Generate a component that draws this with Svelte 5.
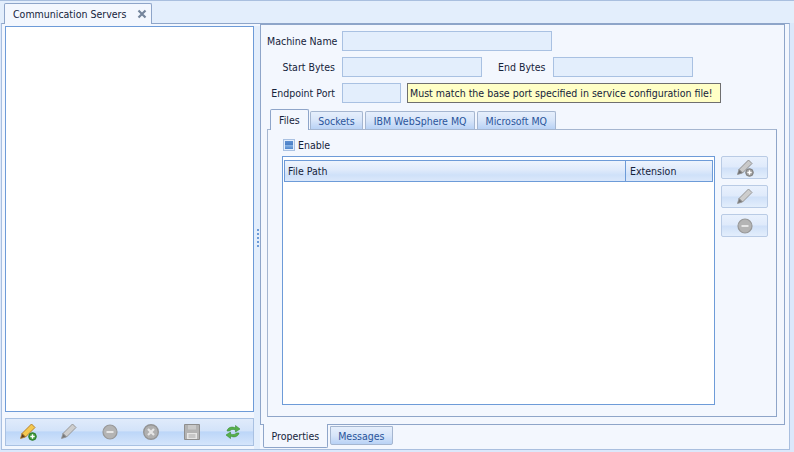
<script>
  const toolbar = ["add", "edit", "minus", "cross", "save", "refresh"];
  const sideButtons = ["addGrey", "edit", "minus"];
  const innerTabs = ["Sockets", "IBM WebSphere MQ", "Microsoft MQ"];
</script>

{#snippet pencil(body, edge, tip)}
  <path d="M12.500 1l3.500 3.500L6.500 14 3 10.500z" fill={body} stroke={edge} stroke-width="1" />
  <path d="M3 10.500L6.500 14l-5 1.500z" fill={tip} stroke={edge} stroke-width=".8" />
{/snippet}

{#snippet icon(name)}
  <svg class="icon" width="18" height="18" viewBox="0 0 18 18" aria-hidden="true">
    {#if name === "add"}
      {@render pencil("#f4c84e", "#b8812a", "#5a3a1e")}
      <circle cx="13.500" cy="13.500" r="3.800" fill="#3f9a3a" stroke="#2c7a2a" />
      <path d="M13.500 11.300v4.400M11.300 13.500h4.400" stroke="#fff" stroke-width="1.400" />
    {:else if name === "addGrey"}
      {@render pencil("#c9c9c9", "#8f8f8f", "#6f6f6f")}
      <circle cx="13.500" cy="13.500" r="3.800" fill="#9a9a9a" stroke="#7f7f7f" />
      <path d="M13.500 11.300v4.400M11.300 13.500h4.400" stroke="#fff" stroke-width="1.400" />
    {:else if name === "edit"}
      {@render pencil("#cdcdcd", "#979797", "#777")}
    {:else if name === "minus"}
      <circle cx="9" cy="9" r="7" fill="#b4b4b4" stroke="#989898" stroke-width="1.200" />
      <path d="M5.500 9h7" stroke="#e6e6e6" stroke-width="2" />
    {:else if name === "cross"}
      <circle cx="9" cy="9" r="7.300" fill="#b0b0b0" stroke="#949494" stroke-width="1.400" />
      <path d="M6 6l6 6M12 6l-6 6" stroke="#e6e6e6" stroke-width="2.200" />
    {:else if name === "save"}
      <path d="M1.500 1.500h15v15h-15z" fill="#b3b3b3" stroke="#8e8e8e" />
      <path d="M5 2h8v4.500H5z" fill="#c9c9c9" />
      <path d="M4 10h10v6H4z" fill="#e6e6e6" />
      <path d="M5.500 12h7M5.500 14h7" stroke="#a8a8a8" />
    {:else if name === "refresh"}
      <path d="M3 8c.6-3.500 5-5 8.500-3V2.500L16 6l-4.500 3V7c-2.500-1.200-5-.5-5.800 1z" fill="#56b04a" stroke="#3b8b35" stroke-width=".6" />
      <path d="M15 10c-.6 3.500-5 5-8.500 3v2.500L2 12l4.500-3v2c2.500 1.200 5 .5 5.800-1z" fill="#56b04a" stroke="#3b8b35" stroke-width=".6" />
    {/if}
  </svg>
{/snippet}

<div class="window">
  <div class="doc-tabs">
    <div class="doc-tab">
      <span>Communication Servers</span>
      <svg width="10" height="10" viewBox="0 0 10 10" aria-hidden="true">
        <path d="M1.500 1.500l7 7M8.500 1.500l-7 7" stroke="#75859c" stroke-width="2.200" />
      </svg>
    </div>
  </div>

  <div class="doc-body">
    <div class="left">
      <div class="list"></div>
      <div class="toolbar">
        {#each toolbar as name}
          <span class="tool">{@render icon(name)}</span>
        {/each}
      </div>
    </div>

    <div class="splitter">
      {#each [0, 1, 2, 3, 4] as dot}
        <i></i>
      {/each}
    </div>

    <div class="right">
      <div class="props">
        <div class="row">
          <label class="name" for="machine">Machine Name</label>
          <input id="machine" class="w210" />
        </div>
        <div class="row">
          <label class="name" for="start">Start Bytes</label>
          <input id="start" class="w140" />
          <label class="end" for="end">End Bytes</label>
          <input id="end" class="w140" />
        </div>
        <div class="row">
          <label class="name" for="port">Endpoint Port</label>
          <input id="port" class="w58" />
          <div class="note">Must match the base port specified in service configuration file!</div>
        </div>

        <div class="inner-tabs">
          <div class="tab active">Files</div>
          {#each innerTabs as t}
            <div class="tab">{t}</div>
          {/each}
        </div>

        <div class="page">
          <div class="enable">
            <span class="check"><b></b></span>
            <span>Enable</span>
          </div>
          <div class="page-main">
            <div class="grid">
              <div class="grid-head">
                <div class="col-path">File Path</div>
                <div class="col-ext">Extension</div>
              </div>
            </div>
            <div class="side">
              {#each sideButtons as name}
                <button type="button">{@render icon(name)}</button>
              {/each}
            </div>
          </div>
        </div>
      </div>

      <div class="bottom-tabs">
        <div class="btab active">Properties</div>
        <div class="btab">Messages</div>
      </div>
    </div>
  </div>
</div>

<style>
  :global(body) {
    margin: 0;
    overflow: hidden;
  }
  .window {
    width: 794px;
    height: 452px;
    box-sizing: border-box;
    display: flex;
    flex-direction: column;
    overflow: hidden;
    background: #dbe8fb;
    border-top: 1px solid #a9bfdf;
    font-family: "DejaVu Sans Condensed", "DejaVu Sans", sans-serif;
    font-stretch: condensed;
    font-size: 10.5px;
    color: #15233b;
  }
  .doc-tabs {
    height: 22px;
    flex: none;
    padding: 2px 0 0 4px;
    box-sizing: border-box;
    display: flex;
    background: #e3eefc;
  }
  .doc-tab {
    width: 148px;
    height: 21px;
    box-sizing: border-box;
    display: flex;
    align-items: center;
    justify-content: space-between;
    padding: 0 4px 0 8px;
    background: #f3f7fe;
    border: 1px solid #8ea5c9;
    border-bottom: 0;
    border-radius: 2px 2px 0 0;
    position: relative;
    z-index: 1;
  }
  .doc-body {
    flex: 1;
    min-height: 0;
    display: flex;
    margin: 0 4px 2px 1px;
    background: #f3f7fe;
    border: 1px solid #a9bfdf;
    border-top-color: #8ea5c9;
    padding: 2px 0 0 3px;
  }
  .left {
    width: 249px;
    flex: none;
    display: flex;
    flex-direction: column;
    box-sizing: border-box;
  }
  .list {
    height: 386px;
    box-sizing: border-box;
    background: #fff;
    border: 1px solid #6d9bd8;
  }
  .toolbar {
    margin-top: 6px;
    height: 28px;
    box-sizing: border-box;
    display: flex;
    padding-left: 1px;
    border: 1px solid #a9c1e2;
    background: linear-gradient(#e0ebfb 0%, #d3e3f9 45%, #bcd6f8 50%, #d5e5fb 100%);
  }
  .tool {
    flex: 1;
    display: flex;
    align-items: center;
    justify-content: center;
  }
  .icon {
    display: block;
  }
  .splitter {
    width: 6px;
    flex: none;
    display: flex;
    flex-direction: column;
    align-items: center;
    justify-content: center;
    gap: 2px;
    padding-left: 2px;
    box-sizing: border-box;
    background: #e3eefc;
  }
  .splitter i {
    width: 2px;
    height: 2px;
    background: #6d9bd8;
  }
  .right {
    flex: 1;
    min-width: 0;
    margin-top: -2px;
    display: flex;
    flex-direction: column;
    padding-right: 4px;
    background: #f3f7fe;
  }
  .props {
    height: 401px;
    box-sizing: border-box;
    background: #f3f7fe;
    border: 1px solid #8ea5c9;
    padding: 0 8px 0 6px;
    display: flex;
    flex-direction: column;
  }
  .row {
    display: flex;
    align-items: center;
    height: 20px;
    margin-top: 6px;
  }
  .name {
    width: 68px;
    text-align: right;
    margin-right: 7px;
    flex: none;
    white-space: nowrap;
  }
  .end {
    margin-left: 16px;
    width: 50px;
    margin-right: 5px;
    white-space: nowrap;
  }
  input {
    height: 20px;
    box-sizing: border-box;
    border: 1px solid #a9c1e2;
    background: #e3eefc;
    padding: 0;
    margin: 0;
    outline: none;
  }
  .w210 { width: 210px; }
  .w140 { width: 140px; }
  .w58 { width: 59px; }
  .note {
    margin-left: 6px;
    width: 314px;
    height: 20px;
    box-sizing: border-box;
    display: flex;
    align-items: center;
    padding-left: 2px;
    white-space: nowrap;
    background: #ffffc6;
    border: 1px solid #6f6f6f;
  }
  .inner-tabs {
    display: flex;
    align-items: flex-end;
    gap: 2px;
    height: 20px;
    margin-top: 6px;
    padding-left: 3px;
  }
  .tab {
    height: 18px;
    box-sizing: border-box;
    padding: 0 7.5px;
    display: flex;
    align-items: center;
    color: #2a559c;
    border: 1px solid #a5b6d0;
    border-bottom: 0;
    border-radius: 2px 2px 0 0;
    background: linear-gradient(#e6effc, #d7e5f9 50%, #b9d2f5);
    white-space: nowrap;
  }
  .tab.active {
    height: 21px;
    margin-right: -1px;
    padding: 0 8px;
    color: #15233b;
    background: #f3f7fe;
    border-color: #8ea5c9;
    margin-bottom: -1px;
    position: relative;
    z-index: 1;
  }
  .page {
    width: 510px;
    height: 288px;
    box-sizing: border-box;
    border: 1px solid #a5b6d0;
    border-right-color: #8ea5c9;
    border-bottom-color: #8ea5c9;
    padding: 0 6px 0 14px;
  }
  .enable {
    display: flex;
    align-items: center;
    gap: 3px;
    height: 26px;
    box-sizing: border-box;
    padding-top: 4px;
    margin-left: 1px;
  }
  .check {
    width: 12px;
    height: 12px;
    box-sizing: border-box;
    border: 1px solid #a9c1e2;
    background: #e3eefc;
    display: flex;
    align-items: center;
    justify-content: center;
  }
  .check b {
    width: 8px;
    height: 8px;
    background: linear-gradient(#5d8fd0 0%, #4a7fc6 50%, #8db7e6 50%, #4f86cc 100%);
  }
  .page-main {
    display: flex;
    gap: 6px;
  }
  .grid {
    width: 433px;
    height: 249px;
    box-sizing: border-box;
    background: #fff;
    border: 1px solid #6d9bd8;
    padding: 3px 1px 0;
  }
  .grid-head {
    height: 22px;
    box-sizing: border-box;
    display: flex;
    border: 1px solid #6d9bd8;
    background: linear-gradient(#eef4fd, #dfeafb 45%, #cfe1f9 70%, #dbe8fb);
  }
  .col-path {
    width: 341px;
    box-sizing: border-box;
    padding-left: 3px;
    line-height: 21px;
    border-right: 1px solid #6d9bd8;
  }
  .col-ext {
    flex: 1;
    padding-left: 4px;
    line-height: 21px;
  }
  .side {
    display: flex;
    flex-direction: column;
    gap: 6px;
  }
  button {
    width: 47px;
    height: 23px;
    box-sizing: border-box;
    padding: 0;
    display: flex;
    align-items: center;
    justify-content: center;
    border: 1px solid #b9cbe5;
    border-radius: 2px;
    background: linear-gradient(#e9f1fd, #dfeafb 48%, #cfe0f8 52%, #e3eefc);
  }
  .bottom-tabs {
    display: flex;
    gap: 2px;
    margin-left: 3px;
    align-items: flex-start;
  }
  .btab {
    height: 19px;
    margin-top: 1px;
    box-sizing: border-box;
    display: flex;
    align-items: center;
    padding: 0 7.5px;
    color: #2a559c;
    border: 1px solid #a5b6d0;
    background: linear-gradient(#e6effc, #d7e5f9 50%, #b9d2f5);
    border-radius: 0 0 2px 2px;
    white-space: nowrap;
  }
  .btab.active {
    height: 24px;
    margin-top: -1px;
    color: #15233b;
    background: #f3f7fe;
    border-color: #8ea5c9;
    border-top: 0;
    position: relative;
    z-index: 1;
  }
</style>
